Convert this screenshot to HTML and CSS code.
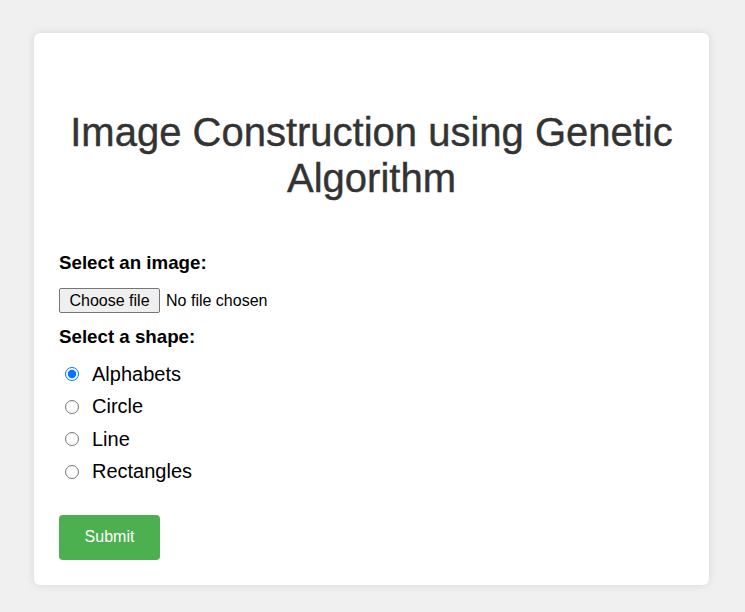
FILE: index.html
```html
<!DOCTYPE html>
<html lang="en">
<head>
<meta charset="utf-8">
<title>Image Construction using Genetic Algorithm</title>
<link rel="stylesheet" href="styles.css">
</head>
<body>
<div class="card">
  <h1 class="title">Image Construction using Genetic Algorithm</h1>
  <form class="form">
    <label class="field-label" for="image">Select an image:</label>
    <label class="file-picker">
      <input class="file-input" type="file" id="image" name="image">
      <span class="file-button">Choose file</span>
      <span class="file-name">No file chosen</span>
    </label>
    <label class="field-label shape-label">Select a shape:</label>
    <div class="options">
      <label class="option"><input type="radio" name="shape" value="alphabets" checked><span>Alphabets</span></label>
      <label class="option"><input type="radio" name="shape" value="circle"><span>Circle</span></label>
      <label class="option"><input type="radio" name="shape" value="line"><span>Line</span></label>
      <label class="option"><input type="radio" name="shape" value="rectangles"><span>Rectangles</span></label>
    </div>
    <button class="submit" type="submit">Submit</button>
  </form>
</div>
</body>
</html>
```

FILE: styles.css
```css
html, body {
  margin: 0;
  padding: 0;
}

body {
  background: #f0f0f0;
  font-family: "Liberation Sans", Arial, sans-serif;
  padding: 33px 0 27px 34px;
}

.card {
  width: 675px;
  box-sizing: border-box;
  background: #ffffff;
  border-radius: 6px;
  box-shadow: 0 0 10px rgba(0, 0, 0, 0.1);
  padding: 76px 25px 25px;
}

.title {
  margin: 0;
  font-size: 40px;
  line-height: 46px;
  font-weight: normal;
  color: #333333;
  text-align: center;
  -webkit-text-stroke: 0.4px #333333;
}

.form {
  display: flex;
  flex-direction: column;
  align-items: flex-start;
  margin-top: 51px;
}

.field-label {
  font-size: 18.72px;
  line-height: 22px;
  font-weight: bold;
  color: #000000;
}

.file-picker {
  display: flex;
  align-items: center;
  margin-top: 14px;
  font-size: 16px;
  line-height: 18px;
  color: #000000;
  cursor: pointer;
}

.file-input {
  display: none;
}

.file-button {
  box-sizing: border-box;
  height: 25px;
  padding: 3px 9.5px 2px;
  background: #efefef;
  border: 1px solid #767676;
  border-radius: 2px;
}

.file-name {
  margin-left: 6px;
}

.shape-label {
  margin-top: 13px;
}

.options {
  display: flex;
  flex-direction: column;
  margin-top: 10px;
}

.option {
  display: flex;
  align-items: center;
  height: 32.5px;
  font-size: 20px;
  line-height: 23px;
  color: #000000;
}

.option input {
  margin: 0 13px 0 6px;
  width: 14px;
  height: 14px;
}

.submit {
  margin-top: 27px;
  background: #4caf50;
  color: #ffffff;
  border: none;
  border-radius: 4px;
  font-family: "Liberation Sans", Arial, sans-serif;
  font-size: 16px;
  line-height: 19px;
  padding: 12px 25.6px 14px;
  cursor: pointer;
}
```
